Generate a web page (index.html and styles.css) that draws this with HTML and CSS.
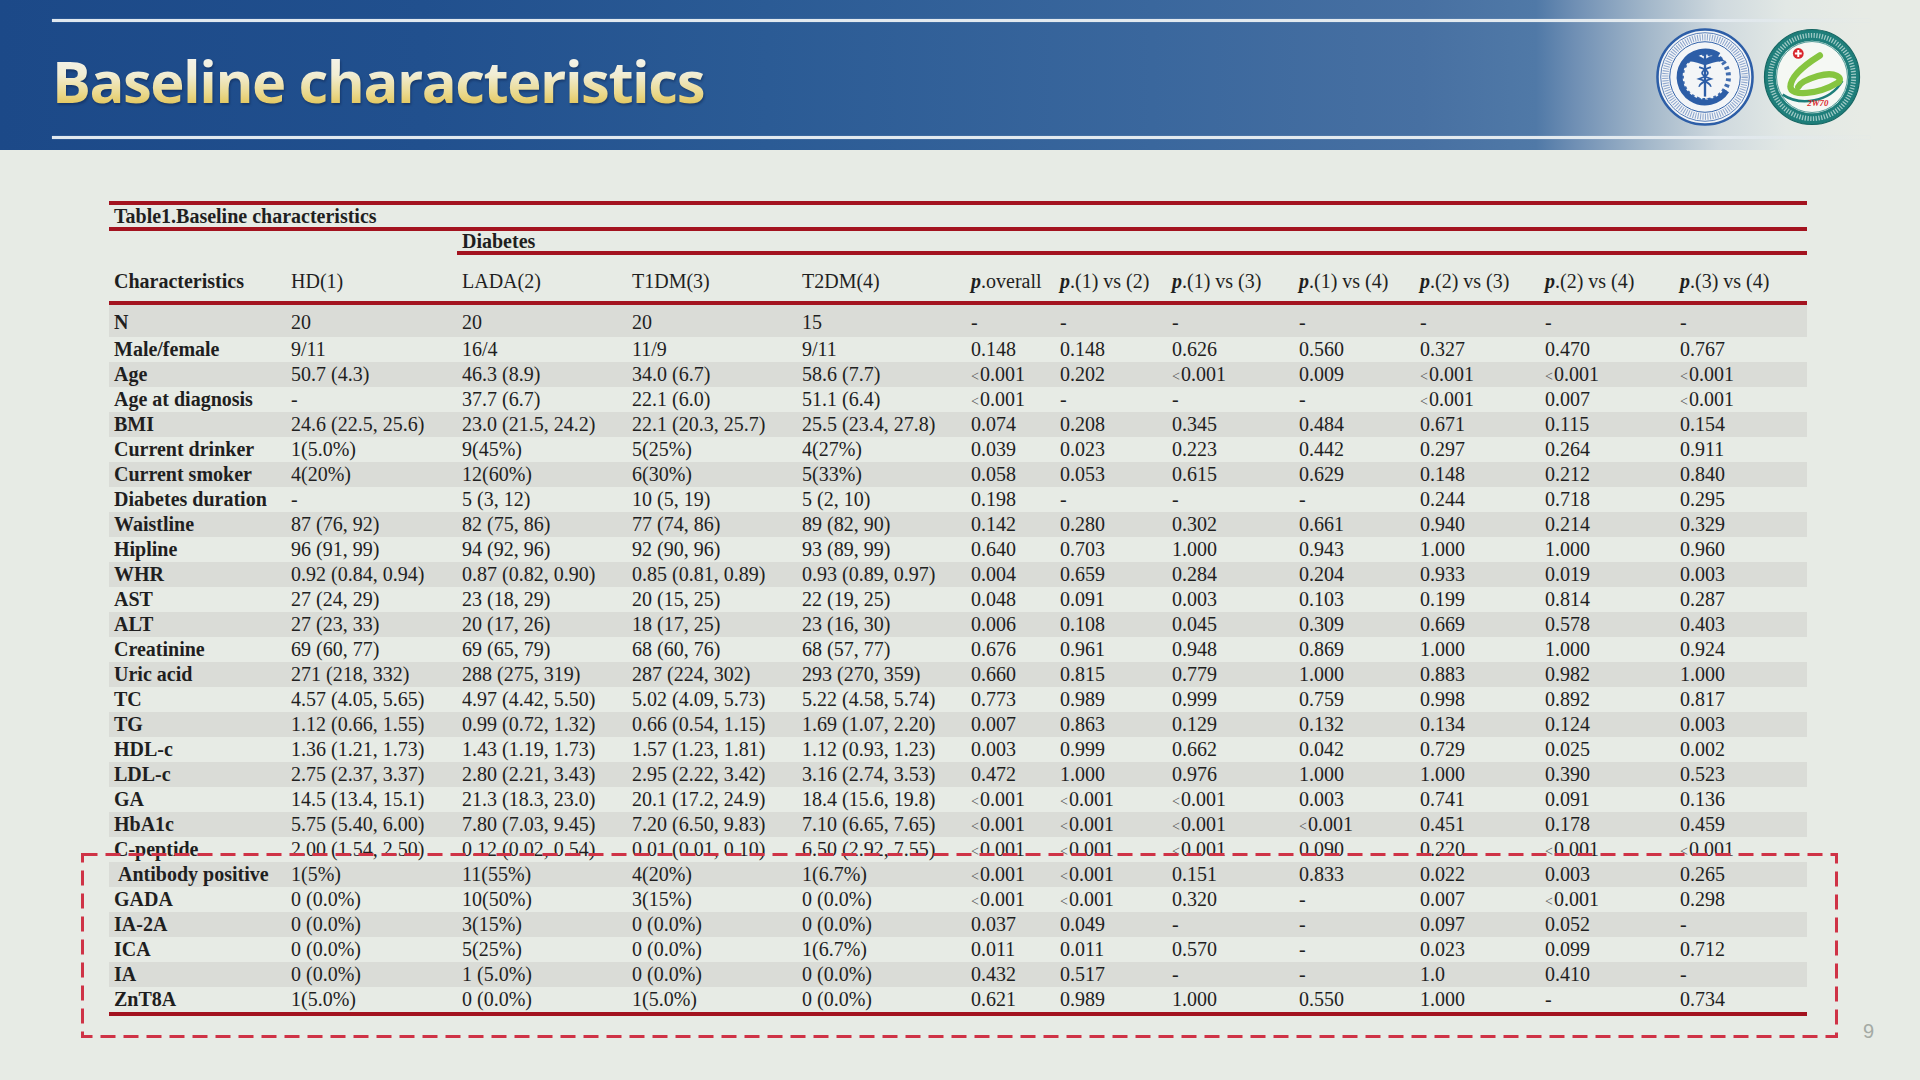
FILE: index.html
```html
<!DOCTYPE html>
<html lang="en">
<head>
<meta charset="utf-8">
<title>Baseline characteristics</title>
<link rel="stylesheet" href="styles.css">
</head>
<body>
<header class="banner">
  <div class="rule"></div>
  <div class="banner-row">
    <h1 class="title">Baseline characteristics</h1>
    <div class="logos">
      <svg class="logo" viewBox="-50 -50 100 100" aria-hidden="true">
        <circle r="48.5" fill="#f3f5f7" stroke="#2d5ea7" stroke-width="2.6"/>
        <circle r="45.2" fill="none" stroke="#2d5ea7" stroke-width="0.8"/>
        <circle r="40.5" fill="none" stroke="#6d8dc0" stroke-width="6.5" stroke-dasharray="1.1 1.4" opacity="0.75"/>
        <circle r="36" fill="none" stroke="#2d5ea7" stroke-width="1"/>
        <path d="M 14 -22 A 26 26 0 1 0 22 14" fill="none" stroke="#2d5ea7" stroke-width="6"/>
        <circle r="24" fill="none" stroke="#2d5ea7" stroke-width="5" stroke-dasharray="3 3" transform="rotate(-40)" opacity="0.9"/>
        <path d="M 0 -24 L 0 20" stroke="#2d5ea7" stroke-width="2.4"/>
        <path d="M 0 -18 C -8 -24, -16 -22, -20 -16 C -12 -17, -6 -14, 0 -12 C 6 -14, 12 -17, 20 -16 C 16 -22, 8 -24, 0 -18 Z" fill="#2d5ea7"/>
        <path d="M -6 -10 C 6 -6, 6 -2, -6 2 C -6 2, 6 6, 6 10 M 6 -10 C -6 -6, -6 -2, 6 2 C 6 2, -6 6, -6 10" fill="none" stroke="#2d5ea7" stroke-width="1.8"/>
        <text x="0" y="28" text-anchor="middle" class="logo-txt">IAT</text>
      </svg>
      <svg class="logo" viewBox="-50 -50 100 100" aria-hidden="true">
        <circle r="48.5" fill="#1e7e7a" stroke="#166662" stroke-width="1.2"/>
        <circle r="42.5" fill="none" stroke="#e6f3f0" stroke-width="5" stroke-dasharray="1.3 1.5" opacity="0.65"/>
        <circle r="37" fill="#f5f8f4"/>
        <circle r="36.2" fill="none" stroke="#1e7e7a" stroke-width="0.8"/>
        <path d="M -30 18 C -12 30, 18 26, 31 4" fill="none" stroke="#1e7e7a" stroke-width="2.5"/>
        <path d="M 8 -22 C -8 -12, -22 0, -22 10 C -22 20, 6 18, 26 6 C 33 1, 24 -6, 6 -1 C -4 2, -12 6, -14 10" fill="none" stroke="#86c540" stroke-width="6.5" stroke-linecap="round"/>
        <circle cx="-14" cy="-24" r="5.5" fill="#d9262c"/>
        <path d="M -14 -27.5 V -20.5 M -17.5 -24 H -10.5" stroke="#fff" stroke-width="2"/>
        <text x="6" y="30" text-anchor="middle" class="logo-red">2W70</text>
      </svg>
    </div>
  </div>
  <div class="rule"></div>
</header>

<main class="slide">
  <table class="baseline">
    <colgroup>
      <col class="c1"><col class="c2"><col class="c3"><col class="c4"><col class="c5"><col class="c6"><col class="c7"><col class="c8"><col class="c9"><col class="c10"><col class="c11"><col class="c12">
    </colgroup>
    <thead>
      <tr class="cap"><th colspan="12">Table1.Baseline characteristics</th></tr>
      <tr class="group"><th></th><th></th><th colspan="10" class="under">Diabetes</th></tr>
      <tr class="head">
        <th class="lab">Characteristics</th>
        <th>HD(1)</th><th>LADA(2)</th><th>T1DM(3)</th><th>T2DM(4)</th>
        <th><b><i>p</i></b>.overall</th>
        <th><b><i>p</i></b>.(1) vs (2)</th>
        <th><b><i>p</i></b>.(1) vs (3)</th>
        <th><b><i>p</i></b>.(1) vs (4)</th>
        <th><b><i>p</i></b>.(2) vs (3)</th>
        <th><b><i>p</i></b>.(2) vs (4)</th>
        <th><b><i>p</i></b>.(3) vs (4)</th>
      </tr>
    </thead>
    <tbody>
      <tr class="band first"><th>N</th><td>20</td><td>20</td><td>20</td><td>15</td><td>-</td><td>-</td><td>-</td><td>-</td><td>-</td><td>-</td><td>-</td></tr>
      <tr><th>Male/female</th><td>9/11</td><td>16/4</td><td>11/9</td><td>9/11</td><td>0.148</td><td>0.148</td><td>0.626</td><td>0.560</td><td>0.327</td><td>0.470</td><td>0.767</td></tr>
      <tr class="band"><th>Age</th><td>50.7 (4.3)</td><td>46.3 (8.9)</td><td>34.0 (6.7)</td><td>58.6 (7.7)</td><td><span class="lt">&lt;</span>0.001</td><td>0.202</td><td><span class="lt">&lt;</span>0.001</td><td>0.009</td><td><span class="lt">&lt;</span>0.001</td><td><span class="lt">&lt;</span>0.001</td><td><span class="lt">&lt;</span>0.001</td></tr>
      <tr><th>Age at diagnosis</th><td>-</td><td>37.7 (6.7)</td><td>22.1 (6.0)</td><td>51.1 (6.4)</td><td><span class="lt">&lt;</span>0.001</td><td>-</td><td>-</td><td>-</td><td><span class="lt">&lt;</span>0.001</td><td>0.007</td><td><span class="lt">&lt;</span>0.001</td></tr>
      <tr class="band"><th>BMI</th><td>24.6 (22.5, 25.6)</td><td>23.0 (21.5, 24.2)</td><td>22.1 (20.3, 25.7)</td><td>25.5 (23.4, 27.8)</td><td>0.074</td><td>0.208</td><td>0.345</td><td>0.484</td><td>0.671</td><td>0.115</td><td>0.154</td></tr>
      <tr><th>Current drinker</th><td>1(5.0%)</td><td>9(45%)</td><td>5(25%)</td><td>4(27%)</td><td>0.039</td><td>0.023</td><td>0.223</td><td>0.442</td><td>0.297</td><td>0.264</td><td>0.911</td></tr>
      <tr class="band"><th>Current smoker</th><td>4(20%)</td><td>12(60%)</td><td>6(30%)</td><td>5(33%)</td><td>0.058</td><td>0.053</td><td>0.615</td><td>0.629</td><td>0.148</td><td>0.212</td><td>0.840</td></tr>
      <tr><th>Diabetes duration</th><td>-</td><td>5 (3, 12)</td><td>10 (5, 19)</td><td>5 (2, 10)</td><td>0.198</td><td>-</td><td>-</td><td>-</td><td>0.244</td><td>0.718</td><td>0.295</td></tr>
      <tr class="band"><th>Waistline</th><td>87 (76, 92)</td><td>82 (75, 86)</td><td>77 (74, 86)</td><td>89 (82, 90)</td><td>0.142</td><td>0.280</td><td>0.302</td><td>0.661</td><td>0.940</td><td>0.214</td><td>0.329</td></tr>
      <tr><th>Hipline</th><td>96 (91, 99)</td><td>94 (92, 96)</td><td>92 (90, 96)</td><td>93 (89, 99)</td><td>0.640</td><td>0.703</td><td>1.000</td><td>0.943</td><td>1.000</td><td>1.000</td><td>0.960</td></tr>
      <tr class="band"><th>WHR</th><td>0.92 (0.84, 0.94)</td><td>0.87 (0.82, 0.90)</td><td>0.85 (0.81, 0.89)</td><td>0.93 (0.89, 0.97)</td><td>0.004</td><td>0.659</td><td>0.284</td><td>0.204</td><td>0.933</td><td>0.019</td><td>0.003</td></tr>
      <tr><th>AST</th><td>27 (24, 29)</td><td>23 (18, 29)</td><td>20 (15, 25)</td><td>22 (19, 25)</td><td>0.048</td><td>0.091</td><td>0.003</td><td>0.103</td><td>0.199</td><td>0.814</td><td>0.287</td></tr>
      <tr class="band"><th>ALT</th><td>27 (23, 33)</td><td>20 (17, 26)</td><td>18 (17, 25)</td><td>23 (16, 30)</td><td>0.006</td><td>0.108</td><td>0.045</td><td>0.309</td><td>0.669</td><td>0.578</td><td>0.403</td></tr>
      <tr><th>Creatinine</th><td>69 (60, 77)</td><td>69 (65, 79)</td><td>68 (60, 76)</td><td>68 (57, 77)</td><td>0.676</td><td>0.961</td><td>0.948</td><td>0.869</td><td>1.000</td><td>1.000</td><td>0.924</td></tr>
      <tr class="band"><th>Uric acid</th><td>271 (218, 332)</td><td>288 (275, 319)</td><td>287 (224, 302)</td><td>293 (270, 359)</td><td>0.660</td><td>0.815</td><td>0.779</td><td>1.000</td><td>0.883</td><td>0.982</td><td>1.000</td></tr>
      <tr><th>TC</th><td>4.57 (4.05, 5.65)</td><td>4.97 (4.42, 5.50)</td><td>5.02 (4.09, 5.73)</td><td>5.22 (4.58, 5.74)</td><td>0.773</td><td>0.989</td><td>0.999</td><td>0.759</td><td>0.998</td><td>0.892</td><td>0.817</td></tr>
      <tr class="band"><th>TG</th><td>1.12 (0.66, 1.55)</td><td>0.99 (0.72, 1.32)</td><td>0.66 (0.54, 1.15)</td><td>1.69 (1.07, 2.20)</td><td>0.007</td><td>0.863</td><td>0.129</td><td>0.132</td><td>0.134</td><td>0.124</td><td>0.003</td></tr>
      <tr><th>HDL-c</th><td>1.36 (1.21, 1.73)</td><td>1.43 (1.19, 1.73)</td><td>1.57 (1.23, 1.81)</td><td>1.12 (0.93, 1.23)</td><td>0.003</td><td>0.999</td><td>0.662</td><td>0.042</td><td>0.729</td><td>0.025</td><td>0.002</td></tr>
      <tr class="band"><th>LDL-c</th><td>2.75 (2.37, 3.37)</td><td>2.80 (2.21, 3.43)</td><td>2.95 (2.22, 3.42)</td><td>3.16 (2.74, 3.53)</td><td>0.472</td><td>1.000</td><td>0.976</td><td>1.000</td><td>1.000</td><td>0.390</td><td>0.523</td></tr>
      <tr><th>GA</th><td>14.5 (13.4, 15.1)</td><td>21.3 (18.3, 23.0)</td><td>20.1 (17.2, 24.9)</td><td>18.4 (15.6, 19.8)</td><td><span class="lt">&lt;</span>0.001</td><td><span class="lt">&lt;</span>0.001</td><td><span class="lt">&lt;</span>0.001</td><td>0.003</td><td>0.741</td><td>0.091</td><td>0.136</td></tr>
      <tr class="band"><th>HbA1c</th><td>5.75 (5.40, 6.00)</td><td>7.80 (7.03, 9.45)</td><td>7.20 (6.50, 9.83)</td><td>7.10 (6.65, 7.65)</td><td><span class="lt">&lt;</span>0.001</td><td><span class="lt">&lt;</span>0.001</td><td><span class="lt">&lt;</span>0.001</td><td><span class="lt">&lt;</span>0.001</td><td>0.451</td><td>0.178</td><td>0.459</td></tr>
      <tr><th>C-peptide</th><td>2.00 (1.54, 2.50)</td><td>0.12 (0.02, 0.54)</td><td>0.01 (0.01, 0.10)</td><td>6.50 (2.92, 7.55)</td><td><span class="lt">&lt;</span>0.001</td><td><span class="lt">&lt;</span>0.001</td><td><span class="lt">&lt;</span>0.001</td><td>0.090</td><td>0.220</td><td><span class="lt">&lt;</span>0.001</td><td><span class="lt">&lt;</span>0.001</td></tr>
      <tr class="band"><th class="indent">Antibody positive</th><td>1(5%)</td><td>11(55%)</td><td>4(20%)</td><td>1(6.7%)</td><td><span class="lt">&lt;</span>0.001</td><td><span class="lt">&lt;</span>0.001</td><td>0.151</td><td>0.833</td><td>0.022</td><td>0.003</td><td>0.265</td></tr>
      <tr><th>GADA</th><td>0 (0.0%)</td><td>10(50%)</td><td>3(15%)</td><td>0 (0.0%)</td><td><span class="lt">&lt;</span>0.001</td><td><span class="lt">&lt;</span>0.001</td><td>0.320</td><td>-</td><td>0.007</td><td><span class="lt">&lt;</span>0.001</td><td>0.298</td></tr>
      <tr class="band"><th>IA-2A</th><td>0 (0.0%)</td><td>3(15%)</td><td>0 (0.0%)</td><td>0 (0.0%)</td><td>0.037</td><td>0.049</td><td>-</td><td>-</td><td>0.097</td><td>0.052</td><td>-</td></tr>
      <tr><th>ICA</th><td>0 (0.0%)</td><td>5(25%)</td><td>0 (0.0%)</td><td>1(6.7%)</td><td>0.011</td><td>0.011</td><td>0.570</td><td>-</td><td>0.023</td><td>0.099</td><td>0.712</td></tr>
      <tr class="band"><th>IA</th><td>0 (0.0%)</td><td>1 (5.0%)</td><td>0 (0.0%)</td><td>0 (0.0%)</td><td>0.432</td><td>0.517</td><td>-</td><td>-</td><td>1.0</td><td>0.410</td><td>-</td></tr>
      <tr class="last"><th>ZnT8A</th><td>1(5.0%)</td><td>0 (0.0%)</td><td>1(5.0%)</td><td>0 (0.0%)</td><td>0.621</td><td>0.989</td><td>1.000</td><td>0.550</td><td>1.000</td><td>-</td><td>0.734</td></tr>
    </tbody>
  </table>

  <svg class="dashbox" viewBox="0 0 1757 185" aria-hidden="true">
    <rect x="1.5" y="1.5" width="1754" height="182" fill="none" stroke="#cf3346" stroke-width="3" stroke-dasharray="15 8"/>
  </svg>

  <div class="pageno">9</div>
</main>
</body>
</html>
```

FILE: styles.css
```css
html, body {
  margin: 0;
  padding: 0;
}

body {
  width: 1920px;
  height: 1080px;
  overflow: hidden;
  background: #e7ebe5;
  font-family: "Liberation Serif", "Times New Roman", serif;
}

/* ---------- banner ---------- */
.banner {
  height: 150px;
  box-sizing: border-box;
  padding-top: 19px;
  background: linear-gradient(to right,
    #1c4988 0%,
    #21508e 22%,
    #2b5b95 40%,
    #3a679d 60%,
    #4770a2 74%,
    #5079a7 80%,
    #6f8fb4 82%,
    #a5b9cb 86%,
    #cfd9de 89.5%,
    #e2e8e5 93%,
    #e7ebe5 97%);
}

.rule {
  height: 3px;
  margin-left: 52px;
  width: 1818px;
  background: linear-gradient(to right, #e0e8ef 0%, #e3eaef 92%, rgba(231, 235, 229, 0) 100%);
  box-shadow: 0 0 1px rgba(220, 230, 240, 0.8);
}

.banner-row {
  height: 114px;
  display: flex;
  align-items: center;
}

.title {
  margin: 0 0 0 52px;
  padding-top: 3px;
  font-family: "Open Sans", "Noto Sans", sans-serif;
  font-weight: 700;
  font-size: 58px;
  line-height: 58px;
  letter-spacing: -1.5px;
  background: linear-gradient(to bottom, #f4f3ec 12%, #f1edd4 42%, #ead98f 72%, #e2c65c 92%);
  -webkit-background-clip: text;
  background-clip: text;
  color: transparent;
  filter: drop-shadow(1px 2px 1px rgba(10, 30, 70, 0.45));
}

.logos {
  margin-left: auto;
  margin-right: 59px;
  margin-top: -4px;
  display: flex;
  gap: 9px;
}

.logo {
  width: 98px;
  height: 98px;
  display: block;
}

.logo-txt {
  font-family: "Liberation Serif", serif;
  font-size: 8px;
  font-weight: 700;
  fill: #2d5ea7;
}

.logo-red {
  font-family: "Liberation Serif", serif;
  font-style: italic;
  font-weight: 700;
  font-size: 9px;
  fill: #d9262c;
}

/* ---------- slide body ---------- */
.slide {
  position: relative;
  padding-top: 51px;
}

.baseline {
  margin-left: 109px;
  width: 1698px;
  table-layout: fixed;
  border-collapse: separate;
  border-spacing: 0;
  font-size: 20px;
  color: #1f1f1f;
}

.c1 { width: 177px; }
.c2 { width: 171px; }
.c3 { width: 170px; }
.c4 { width: 170px; }
.c5 { width: 169px; }
.c6 { width: 89px; }
.c7 { width: 112px; }
.c8 { width: 127px; }
.c9 { width: 121px; }
.c10 { width: 125px; }
.c11 { width: 135px; }
.c12 { width: 132px; }

.baseline th,
.baseline td {
  padding: 0 0 0 5px;
  text-align: left;
  white-space: nowrap;
  vertical-align: middle;
  height: 25px;
  line-height: 25px;
}

.baseline th {
  font-weight: 700;
}

.baseline td {
  font-weight: 400;
}

.cap th {
  height: 22px;
  line-height: 22px;
  border-top: 4px solid #a3131f;
  border-bottom: 4px solid #a3131f;
}

.group th {
  height: 20px;
  line-height: 20px;
}

.group .under {
  border-bottom: 4px solid #a3131f;
}

.head th {
  height: 40px;
  line-height: 40px;
  padding-top: 6px;
  font-weight: 400;
  border-bottom: 4px solid #a3131f;
}

.head th.lab {
  font-weight: 700;
}

.head b {
  font-weight: 700;
}

.band th,
.band td {
  background: #dadcd7;
}

.first th,
.first td {
  height: 29px;
  line-height: 29px;
  padding-top: 3px;
}

.last th,
.last td {
  border-bottom: 4px solid #a3131f;
}

.indent {
  text-indent: 4px;
}

.lt {
  font-size: 14px;
  line-height: 1;
  color: #555;
  margin-right: 1px;
}

.dashbox {
  position: absolute;
  left: 81px;
  top: 703px;
  width: 1757px;
  height: 185px;
}

.pageno {
  margin-top: 3px;
  padding-right: 46px;
  text-align: right;
  font-family: "Liberation Sans", Arial, sans-serif;
  font-size: 20px;
  line-height: 24px;
  color: #a4aaa4;
}
```
